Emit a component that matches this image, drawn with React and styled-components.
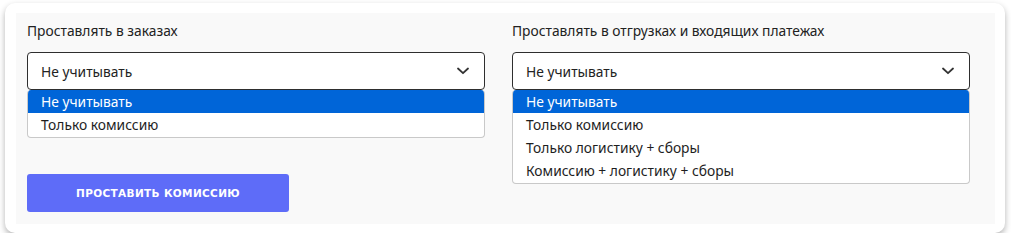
import React from 'react'
import styled, { createGlobalStyle } from 'styled-components'

const GlobalStyle = createGlobalStyle`
  body {
    margin: 0;
    background: #ffffff;
    font-family: "Noto Sans", "Open Sans", sans-serif;
  }
`

const Card = styled.div`
  margin: 3px 0 0 5px;
  width: 1000px;
  height: 230px;
  box-sizing: border-box;
  padding: 10px 10px 9px 11px;
  background: #ffffff;
  border-radius: 10px;
  box-shadow: 0 3px 6px rgba(0, 0, 0, 0.3);
`

const Panel = styled.div`
  height: 100%;
  box-sizing: border-box;
  padding: 9px 11px 0;
  background: #f9f9f9;
`

const Columns = styled.div`
  display: grid;
  grid-template-columns: 458px 458px;
  column-gap: 27px;
`

const Field = styled.div`
  display: flex;
  flex-direction: column;
`

const Label = styled.div`
  font-size: 13.8px;
  line-height: 18px;
  color: #222;
  margin-bottom: 12px;
`

const SelectWrap = styled.div`
  position: relative;
`

const SelectBox = styled.div`
  height: 38px;
  box-sizing: border-box;
  display: flex;
  align-items: center;
  justify-content: space-between;
  padding: 0 15px 0 13px;
  background: #fff;
  border: 1px solid #2e2e2e;
  border-radius: 4px;
  font-size: 13.8px;
  color: #222;
`

const Chevron = () => (
  <svg width="12" height="8" viewBox="0 0 12 8">
    <path d="M1 1.5 L6 6.2 L11 1.5" fill="none" stroke="#333" strokeWidth="1.8" strokeLinecap="round" strokeLinejoin="round" />
  </svg>
)

const List = styled.ul`
  position: absolute;
  top: 38px;
  left: 0;
  right: 0;
  margin: 0;
  padding: 0 0 1px;
  list-style: none;
  background: #fff;
  border: 1px solid #c9c9c9;
  border-top: none;
  border-radius: 4px;
  overflow: hidden;
`

const Option = styled.li`
  height: 23px;
  line-height: 23px;
  padding: 0 13px;
  font-size: 13.8px;
  color: ${p => (p.$active ? '#ffffff' : '#1e1e1e')};
  background: ${p => (p.$active ? '#0065d8' : 'transparent')};
`

const Button = styled.button`
  margin-top: 84px;
  width: 262px;
  height: 38px;
  border: none;
  border-radius: 3px;
  background: #5e6cf8;
  color: #fff;
  font-family: "DejaVu Sans", sans-serif;
  font-weight: 700;
  font-size: 10.5px;
  letter-spacing: 0.35px;
  text-transform: uppercase;
  cursor: pointer;
`

const Dropdown = ({ value, options }) => (
  <SelectWrap>
    <SelectBox>
      <span>{value}</span>
      <Chevron />
    </SelectBox>
    <List>
      {options.map((o, i) => (
        <Option key={o} $active={i === 0}>{o}</Option>
      ))}
    </List>
  </SelectWrap>
)

export default function App() {
  return (
    <>
      <GlobalStyle />
      <Card>
        <Panel>
          <Columns>
            <Field>
              <Label>Проставлять в заказах</Label>
              <Dropdown
                value="Не учитывать"
                options={['Не учитывать', 'Только комиссию']}
              />
              <div>
                <Button>Проставить комиссию</Button>
              </div>
            </Field>
            <Field>
              <Label>Проставлять в отгрузках и входящих платежах</Label>
              <Dropdown
                value="Не учитывать"
                options={[
                  'Не учитывать',
                  'Только комиссию',
                  'Только логистику + сборы',
                  'Комиссию + логистику + сборы',
                ]}
              />
            </Field>
          </Columns>
        </Panel>
      </Card>
    </>
  )
}
